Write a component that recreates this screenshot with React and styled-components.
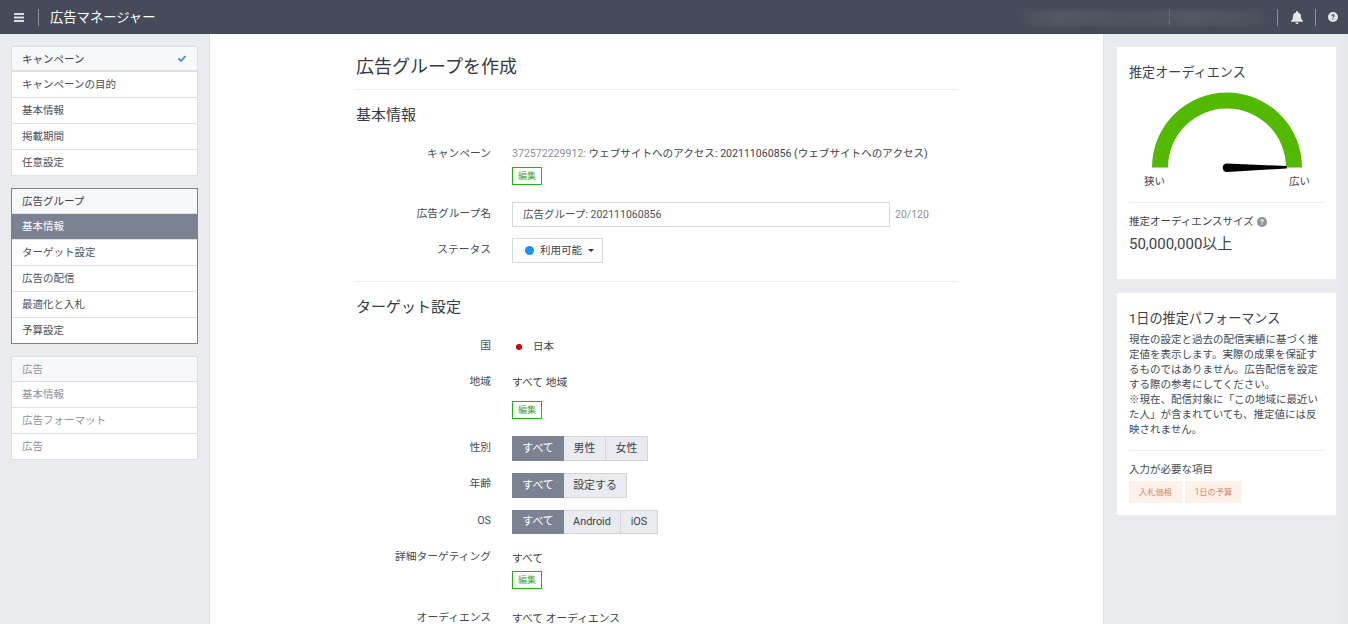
import React from "react";
import styled, { createGlobalStyle } from "styled-components";

const Global = createGlobalStyle`
  html, body { margin: 0; padding: 0; height: 624px; overflow: hidden; background: #fff; }
  body { font-family: Roboto, "Noto Sans CJK JP", sans-serif; font-size: 10.5px; color: #333a45; }
  * { box-sizing: border-box; }
`;

const Page = styled.div`display: flex; flex-direction: column; width: 1348px; height: 624px; overflow: hidden;`;
const Header = styled.header`
  height: 34px; flex: none; background: #454b58; display: flex; align-items: center; color: #fff;
`;
const Burger = styled.button`
  width: 39px; height: 17px; padding: 0; border: 0; border-right: 1px solid #8b909a; background: none; display: flex; align-items: center; justify-content: center;
`;
const Brand = styled.div`margin-left: 11px; padding-bottom: 1px; font-size: 13.3px; color: #fff;`;
const HeaderRight = styled.div`margin-left: auto; display: flex; align-items: center; height: 100%;`;
const BlurWrap = styled.div`position: relative; width: 241px; height: 15px; margin-right: 13px;`;
const Blur = styled.div`
  width: 100%; height: 100%; filter: blur(2px); opacity: .9;
  background: linear-gradient(to right, #4b505d, #555a66 15%, #50555f 40%, #4f5460 50%, #555a66 70%, #4b505d);
`;
const BlurMark = styled.span`position: absolute; left: 146px; top: -1px; height: 17px; border-left: 1px dotted #7d828c;`;
const Tick = styled.span`width: 1px; height: 17px; background: #8b909a;`;
const HeadIcon = styled.span`width: ${p => p.$w}px; padding-left: ${p => p.$pl ?? 0}px; display: flex; justify-content: center; align-items: center;`;

const Body = styled.div`flex: 1; min-height: 0; display: flex;`;
const Side = styled.aside`
  width: 210px; flex: none; background: #e9ebef; border-right: 1px solid #dfe1e6; padding: 12px 12px 0 11px;
  display: flex; flex-direction: column; gap: 12px;
`;
const Group = styled.div`
  border: 1px solid ${p => (p.$active ? "#7b8392" : "#dddfe3")}; background: #fff; width: 187px;
`;
const GroupHead = styled.div`
  height: 25px; padding: 0 11px 1px 10px; background: #f7f8fa; color: ${p => (p.$muted ? "#8d939c" : "#3c424c")};
  border-bottom: ${p => (p.$thick ? 2 : 1)}px solid #dddfe3; display: flex; justify-content: space-between; align-items: center;
`;
const Item = styled.div`
  height: 26px; line-height: 26px; padding-left: 10px; border-bottom: 1px solid #dddfe3;
  color: ${p => (p.$selected ? "#fff" : p.$muted ? "#8d939c" : "#4a505a")};
  background: ${p => (p.$selected ? "#7b8392" : "#fff")};
  &:last-child { border-bottom: 0; height: 25px; }
`;

const Main = styled.main`flex: 1; min-width: 0; background: #fff; overflow: hidden;`;
const Content = styled.div`width: 601px; margin: 0 auto; padding-top: 21px;`;
const Title = styled.h1`
  margin: 0; font-size: 18px; font-weight: 400; line-height: 24px; color: #333a45; padding-bottom: 10px; border-bottom: 1px solid #eceef0;
`;
const Section = styled.h2`margin: 15px 0 ${p => p.$bottom}px; font-size: 15px; font-weight: 400; line-height: 20px; color: #333a45;`;
const Rule = styled.hr`margin: 18px 0 0; border: 0; border-top: 1px solid #eceef0;`;
const Row = styled.div`display: flex; align-items: flex-start; margin-bottom: ${p => p.$mb ?? 0}px;`;
const Label = styled.div`width: 135px; flex: none; margin-top: ${p => p.$top ?? 0}px; font-size: 10.75px; text-align: right; color: #444a54; line-height: 18px; white-space: nowrap;`;
const Value = styled.div`margin-left: 21px; flex: 1; min-width: 0; font-size: ${p => p.$fs ?? 10.5}px; color: #3c424c; line-height: 18px;`;
const Muted = styled.span`color: #8d9096;`;
const Edit = styled.span`
  display: block; width: 30px; height: 18px; margin-top: ${p => p.$mt}px; border: 1px solid #1fb313; color: #46a83e; font-size: 9px; line-height: 16px; text-align: center; background: #fff;
`;
const InputWrap = styled.div`display: flex;`;
const Input = styled.div`
  width: 378px; height: 25px; border: 1px solid #d7d9dd; line-height: 23px; padding-left: 10px; color: #4a505a;
`;
const Counter = styled.span`margin-left: 5px; color: #8d9096; line-height: 25px;`;
const Select = styled.div`
  display: inline-flex; align-items: center; gap: 6px; width: 91px; height: 25px; border: 1px solid #d7d9dd; padding-left: 12px; color: #3c424c; background: #fff;
`;
const Dot = styled.span`width: ${p => p.$s}px; height: ${p => p.$s}px; border-radius: 50%; background: ${p => p.$c}; flex: none;`;
const Caret = styled.span`width: 0; height: 0; border: 3px solid transparent; border-top: 3px solid #333; border-bottom: 0;`;
const Country = styled.div`display: flex; align-items: center; gap: 11px; padding-left: 4px;`;
const Segs = styled.div`display: flex; margin-left: 21px;`;
const Seg = styled.div`
  height: ${p => p.$h ?? 25}px; line-height: ${p => (p.$h ?? 25) - 2}px; text-align: center; width: ${p => p.$w}px; font-size: 10.9px;
  background: ${p => (p.$on ? "#7b8392" : "#e9ebef")}; color: ${p => (p.$on ? "#fff" : "#3c424c")};
  border: 1px solid ${p => (p.$on ? "#7b8392" : "#d3d6db")}; ${p => (p.$on ? "" : "border-left: 0;")}
`;

const Right = styled.aside`
  width: 245px; flex: none; background: #e9ebef; border-left: 1px solid #dfe1e6; padding: 13px 0 0 13px; position: relative;
  display: flex; flex-direction: column; gap: 14px;
`;
const Shade = styled.div`position: absolute; top: 0; right: 0; bottom: 0; width: 8px; background: linear-gradient(to right, #e9ebef, #e4e6ea);`;
const Card = styled.div`width: 219px; background: #fff; padding: 16px 12px 0; height: ${p => p.$h}px; position: relative;`;
const CardTitle = styled.div`font-size: 13.125px; line-height: 20px; color: #3c424c;`;
const Gauge = styled.svg`display: block; margin-top: 8px;`;
const GaugeLabels = styled.div`display: flex; justify-content: space-between; padding: 0 14px 0 15px; margin-top: 1px; line-height: 16px; color: #3c424c;`;
const CardRule = styled.div`border-top: 1px solid #eceef0; margin-top: ${p => p.$t}px;`;
const SizeLabel = styled.div`display: flex; align-items: center; gap: 3px; margin-top: 11px; line-height: 16px; color: #3c424c;`;
const SizeValue = styled.div`font-size: 15px; line-height: 20px; margin-top: 4px; color: #3c424c;`;
const Para = styled.p`margin: 3px 0 0; line-height: 15px; color: #444a54; width: 196px;`;
const Need = styled.div`margin-top: 11px; line-height: 16px; color: #444a54;`;
const Tags = styled.div`display: flex; gap: 3px; margin-top: 3px;`;
const Tag = styled.span`
  height: 22px; width: ${p => p.$w}px; background: #fdf1e9; color: #d08a70; font-size: 8.25px; line-height: 22px; text-align: center;
`;

const Q = ({ fill, mark, size }) => (
  <svg width={size} height={size} viewBox="0 0 16 16">
    <circle cx="8" cy="8" r="8" fill={fill} />
    <path d="M5.4 6.2c0-1.6 1.2-2.6 2.7-2.6s2.6.9 2.6 2.2c0 1-.5 1.5-1.3 2.1-.6.4-.8.7-.8 1.3H7c0-1.1.3-1.6 1.1-2.2.6-.4.9-.7.9-1.1 0-.5-.4-.8-1-.8-.6 0-1 .4-1 1.1H5.4z" fill={mark} />
    <rect x="7" y="10.4" width="1.7" height="1.8" fill={mark} />
  </svg>
);

export default function App() {
  return (
    <Page>
      <Global />
      <Header>
        <Burger aria-label="menu">
          <svg width="10" height="9" viewBox="0 0 10 9"><path d="M0 0h10v2H0zM0 3.5h10v2H0zM0 7h10v2H0z" fill="#d9dbdf" /></svg>
        </Burger>
        <Brand>広告マネージャー</Brand>
        <HeaderRight>
          <BlurWrap><Blur /><BlurMark /></BlurWrap>
          <Tick />
          <HeadIcon $w={37}>
            <svg width="12" height="13" viewBox="0 0 12 13"><path d="M6 0c.6 0 1 .4 1 1v.4c1.9.4 3 1.9 3 3.9 0 2.2.5 3.5 2 4.7v.7H0V10c1.5-1.2 2-2.5 2-4.7 0-2 1.1-3.5 3-3.9V1c0-.6.4-1 1-1zM4.5 11.4h3C7.5 12.3 6.8 13 6 13s-1.5-.7-1.5-1.6z" fill="#e4e5e8" /></svg>
          </HeadIcon>
          <Tick />
          <HeadIcon $w={32} $pl={2}>
            <Q fill="#e4e5e8" mark="#454b58" size={10} />
          </HeadIcon>
        </HeaderRight>
      </Header>
      <Body>
        <Side>
          <Group>
            <GroupHead $thick>
              キャンペーン
              <svg width="8" height="7" viewBox="0 0 8 7"><path d="M0.5 3.5 3 6 7.5 1" fill="none" stroke="#3f8fdc" strokeWidth="1.8" /></svg>
            </GroupHead>
            <Item>キャンペーンの目的</Item>
            <Item>基本情報</Item>
            <Item>掲載期間</Item>
            <Item>任意設定</Item>
          </Group>
          <Group $active>
            <GroupHead>広告グループ</GroupHead>
            <Item $selected>基本情報</Item>
            <Item>ターゲット設定</Item>
            <Item>広告の配信</Item>
            <Item>最適化と入札</Item>
            <Item>予算設定</Item>
          </Group>
          <Group>
            <GroupHead $muted>広告</GroupHead>
            <Item $muted>基本情報</Item>
            <Item $muted>広告フォーマット</Item>
            <Item $muted>広告</Item>
          </Group>
        </Side>
        <Main>
          <Content>
            <Title>広告グループを作成</Title>
            <Section $bottom={20}>基本情報</Section>
            <Row $mb={17}>
              <Label>キャンペーン</Label>
              <Value $fs={10.58}>
                <Muted>372572229912: </Muted>ウェブサイトへのアクセス: 202111060856 (ウェブサイトへのアクセス)
                <Edit $mt={4}>編集</Edit>
              </Value>
            </Row>
            <Row $mb={11}>
              <Label $top={3}>広告グループ名</Label>
              <Value>
                <InputWrap>
                  <Input>広告グループ: 202111060856</Input>
                  <Counter>20/120</Counter>
                </InputWrap>
              </Value>
            </Row>
            <Row>
              <Label $top={3}>ステータス</Label>
              <Value>
                <Select><Dot $s={9} $c="#1e90f0" /><span>利用可能</span><Caret /></Select>
              </Value>
            </Row>
            <Rule />
            <Section $bottom={21}>ターゲット設定</Section>
            <Row $mb={18}>
              <Label $top={-1}>国</Label>
              <Value><Country><Dot $s={6} $c="#d00000" /><span>日本</span></Country></Value>
            </Row>
            <Row $mb={17}>
              <Label $top={-1}>地域</Label>
              <Value $fs={10.75}>すべて 地域<Edit $mt={9}>編集</Edit></Value>
            </Row>
            <Row $mb={12}>
              <Label $top={3}>性別</Label>
              <Segs><Seg $on $w={52}>すべて</Seg><Seg $w={42}>男性</Seg><Seg $w={42}>女性</Seg></Segs>
            </Row>
            <Row $mb={12}>
              <Label $top={2}>年齢</Label>
              <Segs><Seg $on $w={52}>すべて</Seg><Seg $w={63}>設定する</Seg></Segs>
            </Row>
            <Row $mb={16}>
              <Label $top={2}>OS</Label>
              <Segs><Seg $on $w={52} $h={24}>すべて</Seg><Seg $w={57} $h={24}>Android</Seg><Seg $w={37} $h={24}>iOS</Seg></Segs>
            </Row>
            <Row $mb={21}>
              <Label $top={-2}>詳細ターゲティング</Label>
              <Value $fs={10.75}>すべて<Edit $mt={3}>編集</Edit></Value>
            </Row>
            <Row>
              <Label $top={-1}>オーディエンス</Label>
              <Value $fs={10.75}>すべて オーディエンス</Value>
            </Row>
          </Content>
        </Main>
        <Right>
          <Shade />
          <Card $h={232}>
            <CardTitle>推定オーディエンス</CardTitle>
            <Gauge width="195" height="82" viewBox="0 0 195 82">
              <path d="M23 76.5a75 75 0 0 1 150 0h-16a59 59 0 0 0-118 0z" fill="#52b800" />
              <path d="M93.7 76.7C93.7 73.7 96 72.5 98 72.5L157.7 75V77.5L98 81C96 81 93.7 79.7 93.7 76.7z" fill="#000" />
            </Gauge>
            <GaugeLabels><span>狭い</span><span>広い</span></GaugeLabels>
            <CardRule $t={12} />
            <SizeLabel>推定オーディエンスサイズ <Q fill="#8d939c" mark="#fff" size={10} /></SizeLabel>
            <SizeValue>50,000,000以上</SizeValue>
          </Card>
          <Card $h={222}>
            <CardTitle>1日の推定パフォーマンス</CardTitle>
            <Para>現在の設定と過去の配信実績に基づく推定値を表示します。実際の成果を保証するものではありません。広告配信を設定する際の参考にしてください。<br />※現在、配信対象に「この地域に最近いた人」が含まれていても、推定値には反映されません。</Para>
            <CardRule $t={13} />
            <Need>入力が必要な項目</Need>
            <Tags><Tag $w={53}>入札価格</Tag><Tag $w={57}>1日の予算</Tag></Tags>
          </Card>
        </Right>
      </Body>
    </Page>
  );
}
